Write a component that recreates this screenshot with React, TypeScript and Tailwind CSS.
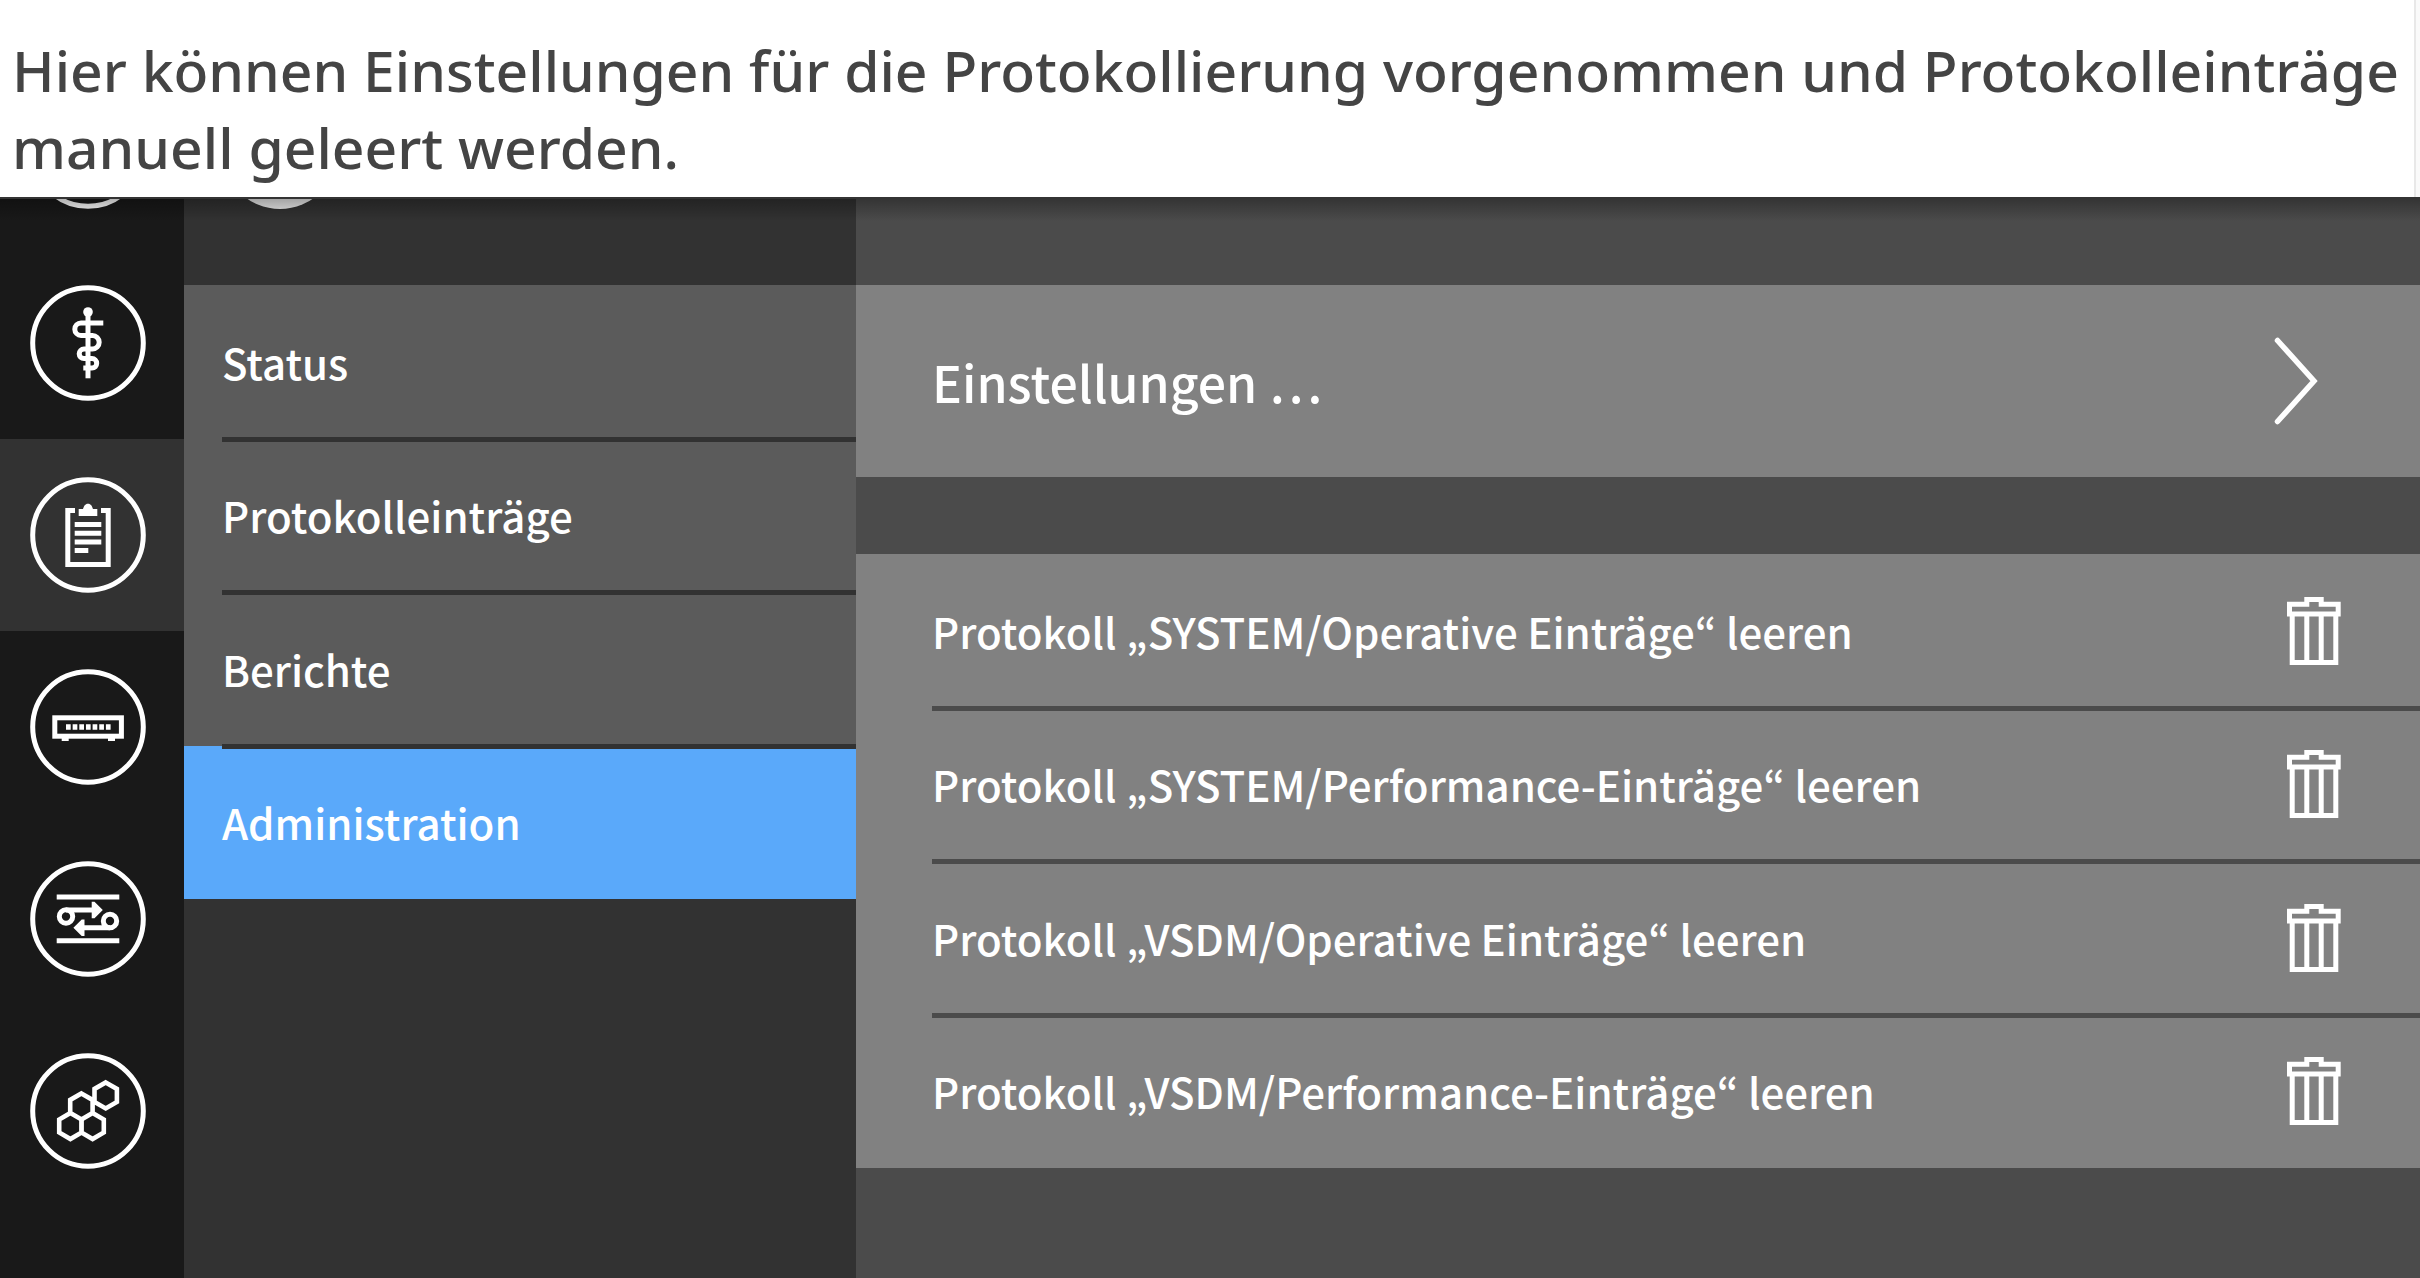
import type { ReactNode } from "react";

function hexagon(cx: number, cy: number) {
  return `M${cx} ${cy - 13}L${cx + 11.2} ${cy - 6.5}V${cy + 6.5}L${cx} ${cy + 13}L${cx - 11.2} ${cy + 6.5}V${cy - 6.5}Z`;
}

function RoundIcon({ children }: { children?: ReactNode }) {
  return (
    <svg viewBox="0 0 116 116" className="size-[116px] shrink-0" fill="none" stroke="#fff" strokeWidth="5" aria-hidden="true">
      <circle cx="58" cy="58" r="55.3" />
      {children}
    </svg>
  );
}

const railItems = [
  {
    label: "Medizin",
    active: false,
    icon: (
      <>
        <circle cx="58" cy="27" r="4.8" fill="#fff" stroke="none" />
        <path d="M58 28V93.3" />
        <path d="M73.3 38H51a6.2 6.2 0 0 0 0 12.4H62.4a6.8 6.8 0 0 1 0 13.6H54a4.8 4.8 0 0 0 0 9.6H62a4.7 4.7 0 0 1 0 9.4H53.3" />
      </>
    ),
  },
  {
    label: "Protokoll",
    active: true,
    icon: (
      <>
        <path d="M45 33.5H37.8V87.5H78.2V33.5H71" />
        <path d="M48.7 39V32H53C54 29 55 26.7 58 26.7S62 29 63 32H67.3V39Z" fill="#fff" stroke="none" />
        <path d="M44.7 47.6H71.3M44.7 56.2H71.3M44.7 64.9H71.3M44.7 73.6H58.3" />
      </>
    ),
  },
  {
    label: "Konnektor",
    active: false,
    icon: (
      <>
        <rect x="24.8" y="48.8" width="66.6" height="18.4" />
        <path d="M31.7 70.4H38.7M78 70.4H85" strokeWidth="3" />
        <path d="M36 58H81" strokeDasharray="4.7 1.95" strokeWidth="5.4" />
      </>
    ),
  },
  {
    label: "Netzwerk",
    active: false,
    icon: (
      <>
        <path d="M26.7 36H89.3M26.7 79.7H89.3" />
        <circle cx="36" cy="55.5" r="6.7" />
        <circle cx="80" cy="60" r="6.7" />
        <path d="M36 49H64M80 66.7H52" />
        <path d="M61.7 40.7H64.5L72.8 49L64.5 57.3H61.7ZM54.5 58.4H51.7L43.4 66.7L51.7 75H54.5Z" fill="#fff" stroke="none" />
      </>
    ),
  },
  {
    label: "Module",
    active: false,
    icon: <path d={hexagon(75.7, 42.4) + hexagon(51.4, 53.4) + hexagon(40.4, 73) + hexagon(62.6, 73)} strokeWidth="4.6" />,
  },
];

const menu = ["Status", "Protokolleinträge", "Berichte", "Administration"];

const logs = [
  "Protokoll „SYSTEM/Operative Einträge“ leeren",
  "Protokoll „SYSTEM/Performance-Einträge“ leeren",
  "Protokoll „VSDM/Operative Einträge“ leeren",
  "Protokoll „VSDM/Performance-Einträge“ leeren",
];

function Trash() {
  return (
    <svg viewBox="0 0 54 68" className="h-[68px] w-[54px] shrink-0" fill="none" stroke="#fff" strokeWidth="5" aria-hidden="true">
      <path d="M2.5 7.2H19.8V2.5H34.2V7.2H51.2V16.9H2.5Z" />
      <path d="M5.2 16.9V65.5H48.8V16.9M19.8 16.9V65.5M34.2 16.9V65.5" />
    </svg>
  );
}

export default function App() {
  return (
    <div className="flex min-h-screen flex-col bg-white">
      <header className="flex">
        <p className="flex-1 pt-8 pb-[11px] pl-3 font-['Noto_Sans',sans-serif] text-[57px] leading-[77px] font-medium text-[#444]">
          Hier können Einstellungen für die Protokollierung vorgenommen und Protokolleinträge manuell geleert werden.
        </p>
        <div className="w-[6px] border-l-2 border-[#e8e8e8] bg-[#fafafa]" />
      </header>

      <div className="relative flex flex-1 font-['Noto_Sans_CJK_KR',sans-serif] text-[42px] leading-none font-medium text-white">
        <nav aria-label="Bereiche" className="w-[184px] shrink-0 bg-[#191919]">
          <button type="button" aria-label="Übersicht" className="flex h-[50px] w-full items-start overflow-hidden pl-[30px]">
            <span className="-mt-[104px]">
              <RoundIcon />
            </span>
          </button>
          {railItems.map((item) => (
            <button
              key={item.label}
              type="button"
              aria-label={item.label}
              className={item.active ? "flex h-48 w-full items-center bg-[#323232] pl-[30px]" : "flex h-48 w-full items-center pl-[30px]"}
            >
              <RoundIcon>{item.icon}</RoundIcon>
            </button>
          ))}
        </nav>

        <aside className="w-[672px] shrink-0 bg-[#323232]">
          <div className="h-[88px] overflow-hidden pl-[38px]">
            <div className="-mt-[104px] size-[116px] rounded-full bg-[#ececec]" />
          </div>
          <ul className="grid h-[614px] grid-rows-4 bg-[#5b5b5b]">
            {menu.map((label, i) => (
              <li key={label} className="relative">
                {i > 0 && <div className="absolute -top-0.5 right-0 left-[38px] h-[5px] bg-[#323232]" />}
                <button
                  type="button"
                  className={i === 3 ? "flex size-full items-center bg-[#5aa9fa] pl-[38px]" : "flex size-full items-center pl-[38px]"}
                >
                  {label}
                </button>
              </li>
            ))}
          </ul>
        </aside>

        <main className="min-w-0 flex-1 bg-[#4b4b4b] pt-[88px]">
          <button type="button" className="flex h-48 w-full items-center justify-between bg-[#818181] pr-[102px] pl-[76px] text-[50px]">
            Einstellungen …
            <svg viewBox="0 0 44 88" className="h-[88px] w-11" fill="none" stroke="#fff" strokeWidth="5.5" strokeLinecap="round" aria-hidden="true">
              <path d="M3.5 3.5L40 44L3.5 84.5" />
            </svg>
          </button>
          <ul className="mt-[77px] grid h-[614px] grid-rows-4 bg-[#818181]">
            {logs.map((label, i) => (
              <li key={label} className="relative">
                {i > 0 && <div className="absolute -top-0.5 right-0 left-[76px] h-[5px] bg-[#4b4b4b]" />}
                <button type="button" className="flex size-full items-center justify-between pr-[79px] pl-[76px]">
                  {label}
                  <Trash />
                </button>
              </li>
            ))}
          </ul>
        </main>

        <div className="pointer-events-none absolute inset-x-0 top-0 h-6 border-t-2 border-[#343434] bg-gradient-to-b from-black/30 to-transparent" />
      </div>
    </div>
  );
}
